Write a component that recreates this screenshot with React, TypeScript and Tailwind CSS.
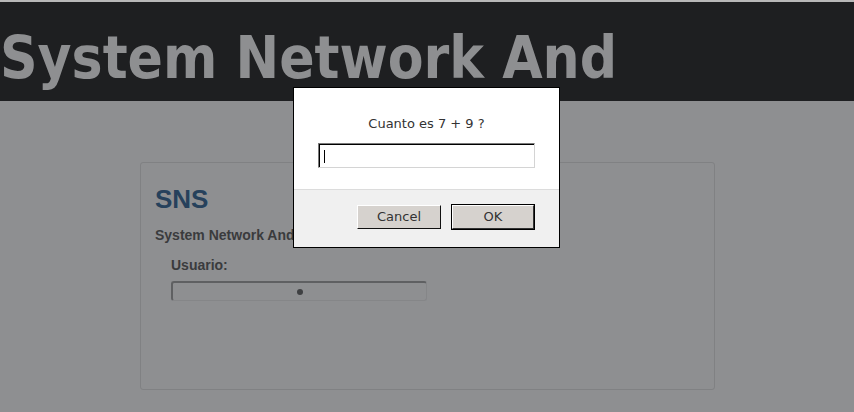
import React from 'react';

const PromptDialog: React.FC<{ question: string }> = ({ question }) => (
  <div className="absolute left-[293px] top-[87px] w-[267px] border border-black bg-white font-['DejaVu_Sans',sans-serif] text-[13px] text-[#333]">
    <div className="px-[24px] pt-[27px] pb-[21px]">
      <p className="text-center leading-[18px]">{question}</p>
      <div className="mt-[10px] flex h-[25px] items-center border border-t-[#7a7a7a] border-l-[#7a7a7a] border-r-[#d4d4d4] border-b-[#d4d4d4]">
        <div className="flex h-full w-full items-center border-t border-l border-black pl-[4px]">
          <span className="h-[13px] w-px bg-black" />
        </div>
      </div>
    </div>
    <div className="flex h-[58px] items-start justify-end gap-[10px] border-t border-[#dcdcdc] bg-[#f0f0f0] pr-[24px] pt-[15px]">
      <button className="h-[24px] w-[84px] border border-t-white border-l-white border-r-[#111] border-b-[#111] bg-[#d6d2ce] text-[13px] text-[#333]">
        Cancel
      </button>
      <button className="-mt-px h-[26px] w-[84px] border border-black bg-[#d6d2ce] text-[13px] text-[#333]">
        <span className="flex h-full w-full items-center justify-center border border-t-white border-l-white border-r-[#333] border-b-[#333]">
          OK
        </span>
      </button>
    </div>
  </div>
);

export default function App() {
  return (
    <div className="relative h-[412px] w-[854px] overflow-hidden bg-[#8e8f91]">
      <div className="h-[2px] bg-[#b8b8b8]" />
      <header className="h-[99px] bg-[#1e1f21] pt-[27px]">
        <h1 className="whitespace-nowrap font-['DejaVu_Sans_Condensed','DejaVu_Sans',sans-serif] text-[58px] font-bold leading-[58px] text-[#8e8f91]">
          System Network And
        </h1>
      </header>

      <main className="pl-[140px] pt-[61px]">
        <section className="h-[228px] w-[575px] rounded-[3px] border border-[#808183] px-[14px] pt-[21px] font-['Liberation_Sans',Arial,sans-serif]">
          <h2 className="text-[26px] font-bold leading-[30px] text-[#26415c]">SNS</h2>
          <p className="mt-[13px] text-[14px] font-bold leading-[16px] text-[#3a3b3d]">System Network And</p>
          <div className="pl-[16px]">
            <label className="mt-[14px] block text-[14px] font-bold leading-[16px] text-[#3a3b3d]">
              Usuario:
            </label>
            <div className="mt-[8px] flex h-[20px] w-[256px] items-center justify-center rounded-[3px] border border-t-2 border-l-2 border-t-[#5f6062] border-l-[#5f6062] border-r-[#858688] border-b-[#858688]">
              <span className="h-[6px] w-[6px] rounded-full bg-[#3f4042]" />
            </div>
          </div>
        </section>
      </main>

      <PromptDialog question="Cuanto es 7 + 9 ?" />
    </div>
  );
}
